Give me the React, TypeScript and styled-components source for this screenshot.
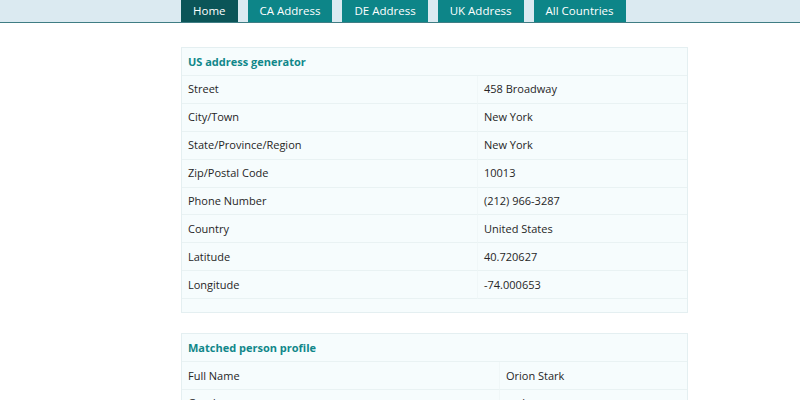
import React from "react";
import styled, { createGlobalStyle } from "styled-components";

const Global = createGlobalStyle`
  html, body { margin: 0; padding: 0; background: #ffffff; }
  body { font-family: "Open Sans", "Noto Sans", sans-serif; font-size: 11px; color: #222; }
`;

const NavBar = styled.nav`
  display: flex;
  gap: 10px;
  height: 22px;
  padding-left: 181px;
  background: #dbeaf1;
  border-bottom: 1px solid #3f7d84;
`;

const Tab = styled.a<{ $active?: boolean }>`
  display: flex;
  align-items: center;
  padding: 0 12px 2px;
  color: #ffffff;
  text-decoration: none;
  font-size: 11.5px;
  background: ${(p) => (p.$active ? "#0b5558" : "#0d8588")};
`;

const Main = styled.main`
  display: flex;
  flex-direction: column;
  gap: 20px;
  padding: 24px 0 0 181px;
`;

const Table = styled.section<{ $cols: string }>`
  box-sizing: border-box;
  width: 507px;
  display: grid;
  grid-template-columns: ${(p) => p.$cols};
  background: #f6fcfd;
  border: 1px solid #e4eff1;
`;

const Header = styled.div`
  grid-column: 1 / -1;
  height: 28px;
  box-sizing: border-box;
  padding: 0 0 1px 6px;
  display: flex;
  align-items: center;
  font-weight: 700;
  color: #10878a;
  border-bottom: 1px solid #e9f2f3;
`;

const Cell = styled.div<{ $value?: boolean }>`
  height: 27.9px;
  box-sizing: border-box;
  padding: 0 0 1px 6px;
  display: flex;
  align-items: center;
  color: #262626;
  border-bottom: 1px solid #e9f2f3;
  ${(p) => (p.$value ? "border-left: 1px solid #f0f7f8;" : "")}
`;

const Spacer = styled.div`
  grid-column: 1 / -1;
  height: 13px;
`;

const address: [string, string][] = [
  ["Street", "458 Broadway"],
  ["City/Town", "New York"],
  ["State/Province/Region", "New York"],
  ["Zip/Postal Code", "10013"],
  ["Phone Number", "(212) 966-3287"],
  ["Country", "United States"],
  ["Latitude", "40.720627"],
  ["Longitude", "-74.000653"],
];

const person: [string, string][] = [
  ["Full Name", "Orion Stark"],
  ["Gender", "male"],
];

const Rows = ({ rows }: { rows: [string, string][] }) => (
  <>
    {rows.map(([k, v]) => (
      <React.Fragment key={k}>
        <Cell>{k}</Cell>
        <Cell $value>{v}</Cell>
      </React.Fragment>
    ))}
  </>
);

export default function App() {
  return (
    <>
      <Global />
      <NavBar>
        <Tab $active href="#">Home</Tab>
        <Tab href="#">CA Address</Tab>
        <Tab href="#">DE Address</Tab>
        <Tab href="#">UK Address</Tab>
        <Tab href="#">All Countries</Tab>
      </NavBar>
      <Main>
        <Table $cols="295px 1fr">
          <Header>US address generator</Header>
          <Rows rows={address} />
          <Spacer />
        </Table>
        <Table $cols="317px 1fr">
          <Header>Matched person profile</Header>
          <Rows rows={person} />
        </Table>
      </Main>
    </>
  );
}
